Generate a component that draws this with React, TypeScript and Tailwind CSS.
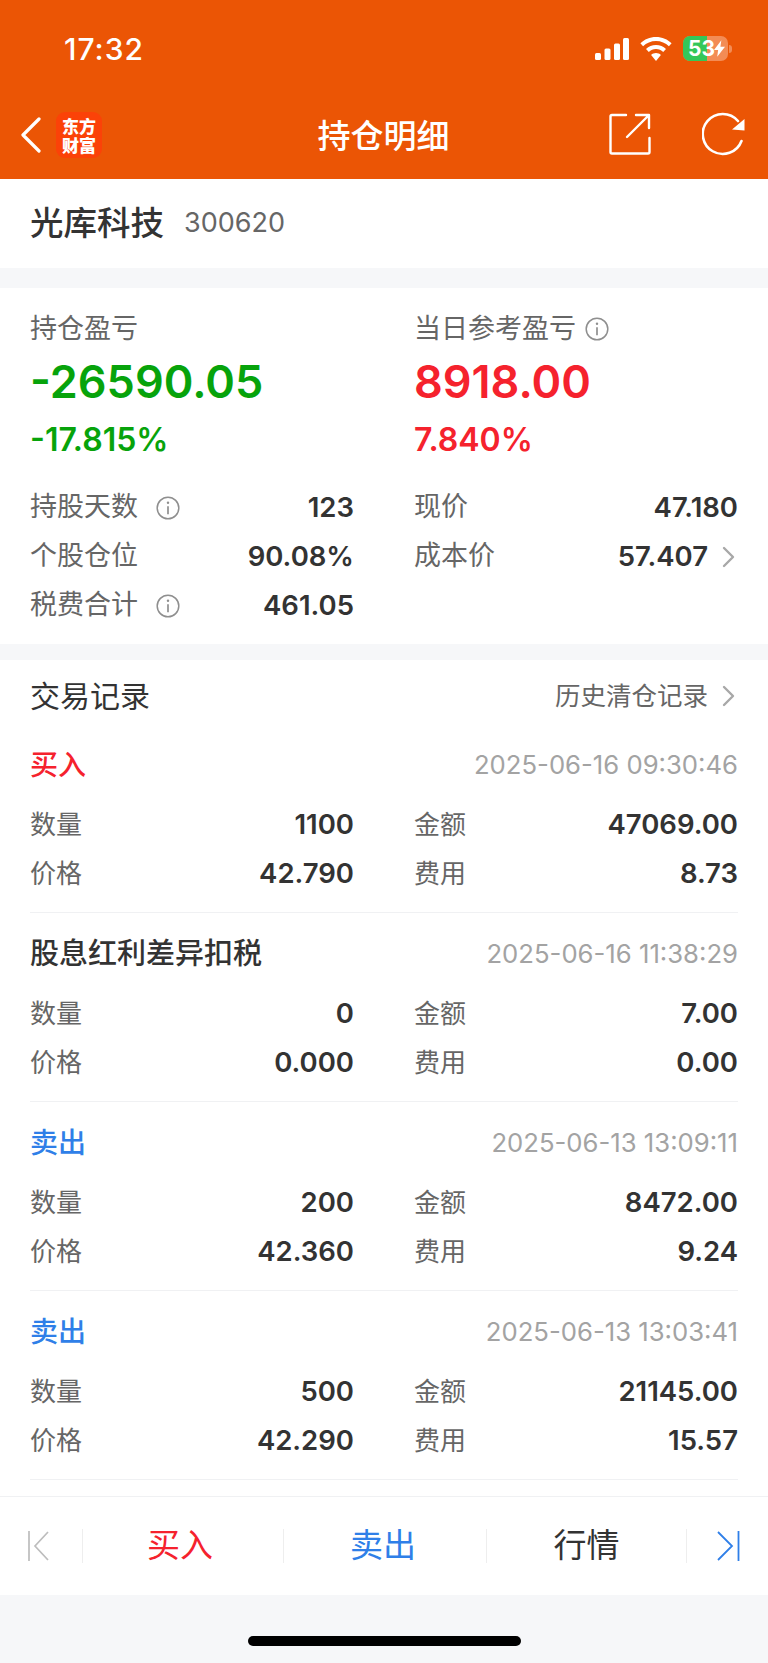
const sans = "font-['Inter','Noto_Sans_CJK_SC',sans-serif]"

const InfoIcon = ({ className = '' }: { className?: string }) => (
  <svg viewBox="0 0 24 24" className={`h-6 w-6 shrink-0 ${className}`} fill="none" stroke="#8f8f8f">
    <circle cx="12" cy="12" r="10.8" strokeWidth="1.5" />
    <circle cx="12" cy="6.8" r="1.2" fill="#8f8f8f" stroke="none" />
    <path d="M12 10.2v8" strokeWidth="1.7" />
  </svg>
)

const Chevron = () => (
  <svg viewBox="0 0 13 22" className="mr-[3px] h-[22px] w-[13px] shrink-0" fill="none" stroke="#a8a8a8" strokeWidth="2.4" strokeLinecap="round" strokeLinejoin="round">
    <path d="M2 2l9 9-9 9" />
  </svg>
)

const StatusBar = () => (
  <div className="flex h-[98px] items-start justify-between pl-16 pr-9 pt-9">
    <span className="text-[30px] leading-[26px] font-medium tracking-[1px] text-white">17:32</span>
    <div className="flex items-center">
      <svg viewBox="0 0 34 22" className="h-[22px] w-[34px]" fill="white">
        <rect x="0" y="15" width="6" height="7" rx="1.5" />
        <rect x="9.5" y="10.5" width="6" height="11.5" rx="1.5" />
        <rect x="19" y="5.5" width="6" height="16.5" rx="1.5" />
        <rect x="28" y="0" width="6" height="22" rx="1.5" />
      </svg>
      <svg viewBox="0 0 32 24" className="ml-[11px] h-6 w-8" fill="white">
        <path d="M16 0C9.8 0 4.4 2.4 .4 6.3l2.7 2.9C6.4 5.9 11 3.9 16 3.9s9.6 2 12.9 5.3l2.7-2.9C27.6 2.4 22.2 0 16 0z" />
        <path d="M16 8c-3.9 0-7.4 1.5-10 4l2.8 2.9c1.9-1.8 4.4-2.9 7.2-2.9s5.3 1.1 7.2 2.9L26 12c-2.6-2.5-6.1-4-10-4z" />
        <path d="M16 16c-1.9 0-3.6.7-4.9 1.9L16 24l4.9-6.1C19.6 16.7 17.9 16 16 16z" />
      </svg>
      <div className="relative ml-[11px] flex h-[25px] w-[45px] items-center overflow-hidden rounded-[7px] bg-[#f38c55]">
        <div className="h-full w-6 bg-[#34c759]" />
        <span className="absolute left-[5px] text-[21px] leading-[25px] font-bold text-white">53</span>
        <svg viewBox="0 0 12 18" className="absolute right-[3px] h-[17px] w-[11px]" fill="white">
          <path d="M8 0L0 10.5h4.5L3.5 18 12 7H7z" />
        </svg>
      </div>
      <div className="ml-px h-2 w-[3px] rounded-r-sm bg-[#f38c55]" />
    </div>
  </div>
)

const TopBar = () => (
  <div className="flex h-[81px] items-start pl-[21px] pr-[22px] pt-[14px]">
    <div className="flex flex-1 items-center">
      <svg viewBox="0 0 20 36" className="h-9 w-5" fill="none" stroke="white" strokeWidth="3.2" strokeLinecap="round" strokeLinejoin="round">
        <path d="M18 2L2 18l16 16" />
      </svg>
      <div className="ml-[15px] flex h-[46px] w-[46px] items-center justify-center rounded-[9px] bg-[#fb4208] font-['Noto_Sans_CJK_SC',sans-serif] text-[17px] leading-[19px] font-black text-white">
        <span className="w-[34px] text-center">东方财富</span>
      </div>
    </div>
    <span className="pt-[4px] text-[33px] leading-[40px] font-medium text-white">持仓明细</span>
    <div className="flex flex-1 items-center justify-end gap-[51px]">
      <svg viewBox="0 0 42 42" className="h-[42px] w-[42px]" fill="none" stroke="white" strokeWidth="2.4" strokeLinecap="round" strokeLinejoin="round">
        <path d="M17 2H3a1.5 1.5 0 0 0-1.5 1.500V39a1.500 1.500 0 0 0 1.500 1.500h36a1.500 1.500 0 0 0 1.500-1.500V25" />
        <path d="M18 24L40 2M27 2h13v13" />
      </svg>
      <svg viewBox="0 0 44 44" className="h-11 w-11" fill="none" stroke="white" strokeWidth="2.600" strokeLinecap="round">
        <path d="M39.500 29A20 20 0 1 1 36 9" />
        <path d="M30 17.500L42.500 18.500V7z" fill="white" stroke="none" />
      </svg>
    </div>
  </div>
)

const Stat = ({ label, value, info, arrow }: { label: string; value: string; info?: boolean; arrow?: boolean }) => (
  <div className="flex h-[49px] items-center justify-between">
    <span className="flex items-center gap-[18px] text-[27px] text-[#666666]">
      {label}
      {info && <InfoIcon />}
    </span>
    <span className="flex items-center gap-[14px] text-[27.500px] font-semibold text-[#333333]">
      {value}
      {arrow && <Chevron />}
    </span>
  </div>
)

const Cell = ({ label, value }: { label: string; value: string }) => (
  <div className="flex h-[49px] items-center justify-between">
    <span className="text-[26px] text-[#666666]">{label}</span>
    <span className="text-[27.500px] font-semibold text-[#333333]">{value}</span>
  </div>
)

interface TradeProps {
  type: string
  color: string
  time: string
  qty: string
  amount: string
  price: string
  fee: string
}

const Trade = ({ type, color, time, qty, amount, price, fee }: TradeProps) => (
  <div className="h-[189px] border-b border-[#f0f1f3]">
    <div className="flex h-[76px] items-center justify-between pt-[6px]">
      <span className={`font-medium ${color}`}>{type}</span>
      <span className="text-[25.700px] text-[#a3a3a3]">{time}</span>
    </div>
    <div className="grid grid-cols-2 gap-x-[60px]">
      <Cell label="数量" value={qty} />
      <Cell label="金额" value={amount} />
      <Cell label="价格" value={price} />
      <Cell label="费用" value={fee} />
    </div>
  </div>
)

const trades: TradeProps[] = [
  { type: '买入', color: 'text-[28px] text-[#f5222d]', time: '2025-06-16 09:30:46', qty: '1100', amount: '47069.00', price: '42.790', fee: '8.73' },
  { type: '股息红利差异扣税', color: 'text-[29px] text-[#333333]', time: '2025-06-16 11:38:29', qty: '0', amount: '7.00', price: '0.000', fee: '0.00' },
  { type: '卖出', color: 'text-[28px] text-[#2f7fe8]', time: '2025-06-13 13:09:11', qty: '200', amount: '8472.00', price: '42.360', fee: '9.24' },
  { type: '卖出', color: 'text-[28px] text-[#2f7fe8]', time: '2025-06-13 13:03:41', qty: '500', amount: '21145.00', price: '42.290', fee: '15.57' },
]

const BottomNav = () => (
  <div className="flex h-[99px] items-center border-t border-[#f0f1f3] bg-white text-[33px]">
    <div className="flex w-[82px] justify-end pr-[33px]">
      <svg viewBox="0 0 21 30" className="h-[30px] w-[21px]" fill="none" stroke="#bdbdbd" strokeWidth="1.700">
        <path d="M1 0v30M20 1L7 15l13 14" />
      </svg>
    </div>
    <div className="flex h-[34px] flex-1 items-center justify-center border-l border-[#eeeeee] pr-[6px] text-[#f5222d]">买入</div>
    <div className="flex h-[34px] w-[203px] items-center justify-center border-l border-[#eeeeee] pr-[4px] text-[#2f7fe8]">卖出</div>
    <div className="flex h-[34px] w-[201px] items-center justify-center border-x border-[#eeeeee] text-[#333333]">行情</div>
    <div className="flex w-[81px] justify-start pl-[30px]">
      <svg viewBox="0 0 23 30" className="h-[30px] w-[23px]" fill="none" stroke="#2f7fe8" strokeWidth="1.800">
        <path d="M1 1l14 14L1 29M21.500 0v30" />
      </svg>
    </div>
  </div>
)

export default function App() {
  return (
    <div className={`flex h-[1663px] w-[768px] flex-col overflow-hidden bg-[#f6f7f9] ${sans}`}>
      <header className="bg-[#eb5505]">
        <StatusBar />
        <TopBar />
      </header>

      <section className="flex h-[89px] items-center gap-5 bg-white px-[30px]">
        <span className="text-[33.500px] font-medium text-[#333333]">光库科技</span>
        <span className="text-[27px] text-[#666666]">300620</span>
      </section>

      <section className="mt-5 grid h-[356px] grid-cols-2 gap-x-[60px] bg-white px-[30px] pt-[21px]">
        <div>
          <div className="flex h-10 items-center text-[27px] text-[#666666]">持仓盈亏</div>
          <div className="h-[66px] text-[45px] leading-[66px] font-semibold text-[#07a30b]">-26590.05</div>
          <div className="h-[68px] text-[32px] leading-[50px] font-semibold text-[#07a30b]">-17.815%</div>
          <Stat label="持股天数" value="123" info />
          <Stat label="个股仓位" value="90.08%" />
          <Stat label="税费合计" value="461.05" info />
        </div>
        <div>
          <div className="flex h-10 items-center gap-[9px] text-[27px] text-[#666666]">
            当日参考盈亏
            <InfoIcon />
          </div>
          <div className="h-[66px] text-[45px] leading-[66px] font-semibold text-[#f5222d]">8918.00</div>
          <div className="h-[68px] text-[32px] leading-[50px] font-semibold text-[#f5222d]">7.840%</div>
          <Stat label="现价" value="47.180" />
          <Stat label="成本价" value="57.407" arrow />
        </div>
      </section>

      <section className="mt-4 flex-1 bg-white px-[30px]">
        <div className="flex h-16 items-center justify-between pt-2">
          <span className="text-[30px] text-[#333333]">交易记录</span>
          <span className="flex items-center gap-[14px] text-[25.500px] text-[#666666]">
            历史清仓记录
            <Chevron />
          </span>
        </div>
        {trades.map(t => (
          <Trade key={t.time} {...t} />
        ))}
      </section>

      <BottomNav />

      <div className="flex h-[68px] justify-center bg-[#f6f7f9] pt-[41px]">
        <div className="h-[10px] w-[273px] rounded-full bg-black" />
      </div>
    </div>
  )
}
